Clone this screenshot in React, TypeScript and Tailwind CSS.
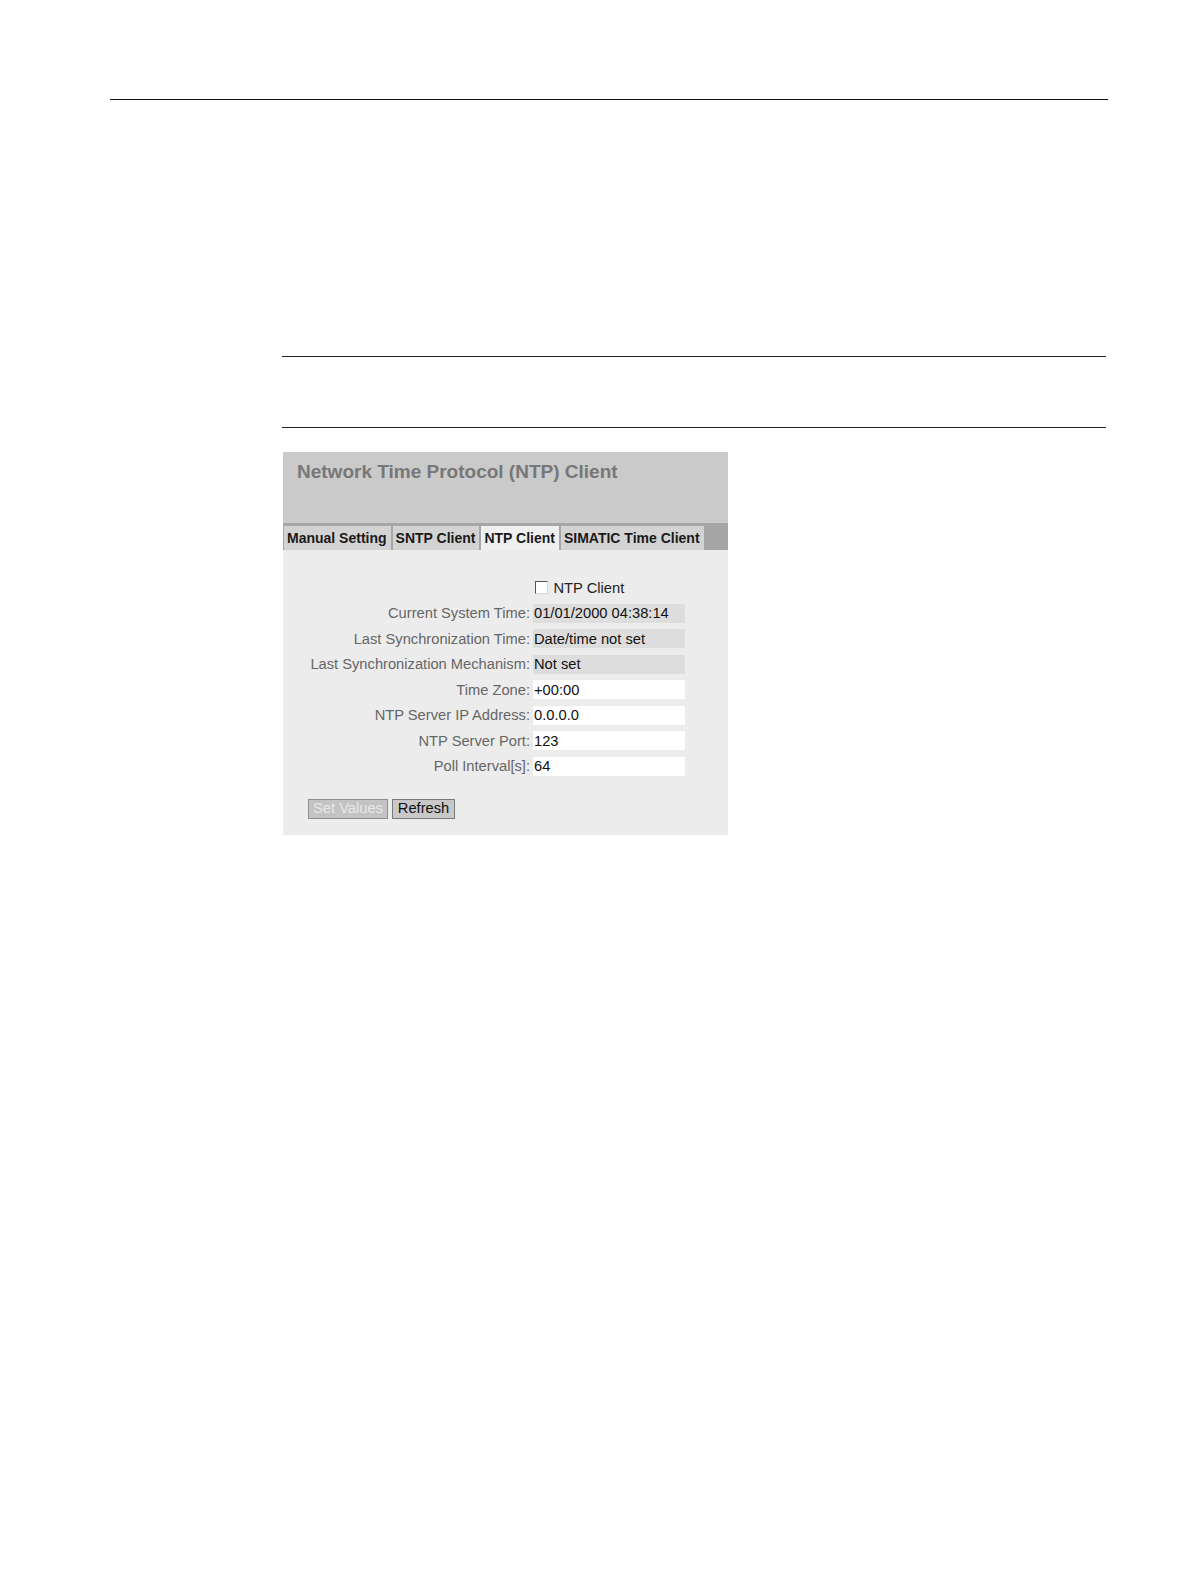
import React from 'react'

const font = { fontFamily: '"Liberation Sans", Arial, sans-serif' }

const tabs = [
  { label: 'Manual Setting', active: false },
  { label: 'SNTP Client', active: false },
  { label: 'NTP Client', active: true },
  { label: 'SIMATIC Time Client', active: false },
]

const rows: { label: string; value: string; readOnly: boolean }[] = [
  { label: 'Current System Time:', value: '01/01/2000 04:38:14', readOnly: true },
  { label: 'Last Synchronization Time:', value: 'Date/time not set', readOnly: true },
  { label: 'Last Synchronization Mechanism:', value: 'Not set', readOnly: true },
  { label: 'Time Zone:', value: '+00:00', readOnly: false },
  { label: 'NTP Server IP Address:', value: '0.0.0.0', readOnly: false },
  { label: 'NTP Server Port:', value: '123', readOnly: false },
  { label: 'Poll Interval[s]:', value: '64', readOnly: false },
]

function NtpPanel() {
  return (
    <div className="w-[445px] bg-[#ececec]" style={font}>
      <div className="h-[71px] bg-[#cacaca] pl-[14px] pt-[8px]">
        <h1 className="text-[19px] font-bold leading-[23px] text-[#777]">
          Network Time Protocol (NTP) Client
        </h1>
      </div>
      <div className="flex h-[27px] border-t-[3px] border-[#a6a6a6] bg-[#a6a6a6]">
        {tabs.map((t) => (
          <div
            key={t.label}
            className={
              'mr-[2px] flex items-center pl-[3px] pr-[4px] text-[14px] font-bold text-[#1a1a1a] first:ml-[1px] ' +
              (t.active ? 'bg-[#efefef]' : 'bg-[#d3d3d3]')
            }
          >
            {t.label}
          </div>
        ))}
      </div>
      <div className="pt-[25px] pb-[16px] text-[14.7px]">
        <div className="flex h-[25.5px] items-center pl-[251.5px]">
          <span className="mr-[6px] h-[13px] w-[13px] border border-t-[#555] border-l-[#555] border-r-[#d8d8d8] border-b-[#d8d8d8] bg-white" />
          <span className="text-[#222]">NTP Client</span>
        </div>
        {rows.map((r) => (
          <div key={r.label} className="flex h-[25.5px] items-center">
            <div className="w-[247px] text-right text-[#666]">{r.label}</div>
            <div
              className={
                'ml-[3px] flex h-[19px] w-[152px] items-center pl-[1px] text-[#111] ' +
                (r.readOnly ? 'bg-[#dddddd]' : 'bg-white')
              }
            >
              {r.value}
            </div>
          </div>
        ))}
        <div className="mt-[19.5px] flex gap-[4px] pl-[25px]">
          <button
            type="button"
            disabled
            className="h-[20px] w-[80px] border border-[#8c8c8c] bg-[#c3c3c3] leading-none text-[#e8e8e8]"
          >
            Set Values
          </button>
          <button
            type="button"
            className="h-[20px] w-[63px] border border-[#7a7a7a] bg-[#c8c8c8] leading-none text-[#111]"
          >
            Refresh
          </button>
        </div>
      </div>
    </div>
  )
}

export default function App() {
  return (
    <div className="bg-white pt-[99px] pb-[40px]">
      <div className="ml-[110px] h-px w-[998px] bg-[#111]" />
      <div className="ml-[282px] mt-[256px] h-px w-[824px] bg-[#222]" />
      <div className="ml-[282px] mt-[70px] h-px w-[824px] bg-[#222]" />
      <div className="ml-[283px] mt-[24px]">
        <NtpPanel />
      </div>
    </div>
  )
}
